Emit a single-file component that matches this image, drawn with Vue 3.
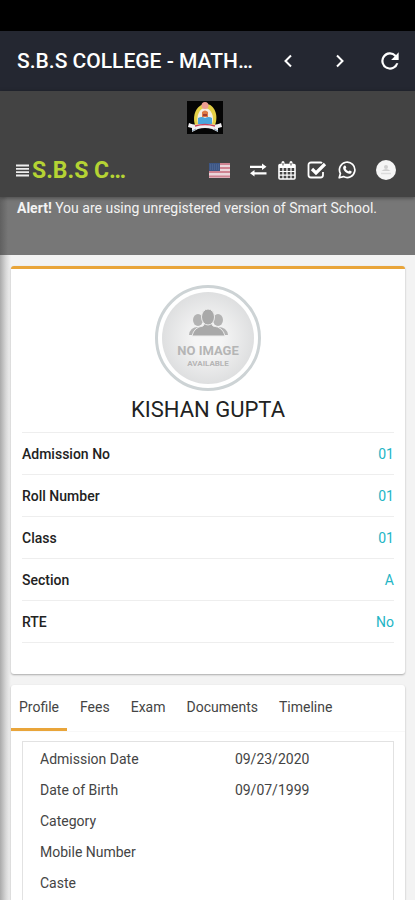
<template>
  <div class="app">
    <div class="status-bar"></div>

    <!-- browser bar -->
    <nav class="browser-bar">
      <span class="page-title">S.B.S COLLEGE - MATH…</span>
      <button type="button" class="nav-btn" aria-label="Back">
        <svg width="24" height="24" viewBox="0 0 24 24"><path d="M14 6.500 8.500 12l5.500 5.500" class="stroke" /></svg>
      </button>
      <button type="button" class="nav-btn" aria-label="Forward">
        <svg width="24" height="24" viewBox="0 0 24 24"><path d="M10 6.500 15.500 12 10 17.500" class="stroke" /></svg>
      </button>
      <button type="button" class="nav-btn" aria-label="Reload">
        <svg width="26" height="26" viewBox="0 0 24 24">
          <path fill="#fff" d="M17.650 6.350A8 8 0 1 0 19.730 14h-2.080A6 6 0 1 1 12 6c1.660 0 3.140.690 4.220 1.780L13 11h7V4z" />
        </svg>
      </button>
    </nav>

    <!-- school header -->
    <header class="header">
      <a href="#" class="logo" aria-label="Home">
        <svg width="36" height="33" viewBox="0 0 36 33">
          <rect width="36" height="33" fill="#050505" />
          <path d="M8 24C5 15 9 4 18 3s14 11 10 21z" fill="#e3cf45" />
          <path d="M11 23c-2-7 1-16 7-16s10 9 7 16z" fill="#f6eee2" />
          <circle cx="18" cy="4.500" r="3.500" fill="#ef9d92" />
          <path d="M15 11q3-3 6 0v5h-6z" fill="#dd7a45" />
          <path d="M16 13h4v2h-4z" fill="#a33f35" />
          <path d="M11 17q4-2 7 0 4-2 7 0v6H11z" fill="#4aa5dc" />
          <path d="M2 22c6 3 9 1 16 1s10 2 16-1l1 4-4 1v4l-6-3q-7-2-14 0l-6 3v-4l-4-1z" fill="#f2f0f2" />
          <path d="M8 25q10-3 20 0" fill="none" stroke="#c9425b" stroke-width="1.500" />
          <path d="m5 30 4-2m18 0 4 2" stroke="#7e9bb0" />
        </svg>
      </a>
      <div class="toolbar">
        <button type="button" class="icon-btn" aria-label="Menu">
          <svg width="13" height="13" viewBox="0 0 13 13"><path d="M0 1.500h13M0 4.800h13M0 8.200h13M0 11.500h13" stroke="#eee" stroke-width="1.800" /></svg>
        </button>
        <a href="#" class="brand">S.B.S C…</a>
        <div class="tools">
          <button type="button" class="icon-btn flag" aria-label="Language">
            <svg width="21" height="15" viewBox="0 0 21 15">
              <rect width="21" height="15" fill="#ead5da" />
              <path d="M0 1h21M0 5h21M0 9h21M0 13.500h21" stroke="#cf8391" stroke-width="2" />
              <rect width="11" height="8" fill="#3d5684" />
              <path d="M1 2h9M1 4h9M1 6h9" stroke="#6d85ab" stroke-width=".6" stroke-dasharray="1 1" />
            </svg>
          </button>
          <button type="button" class="icon-btn" aria-label="Switch class">
            <svg width="18" height="14" viewBox="0 0 18 14">
              <path d="M1 2.800h12V.500l4.500 3.300L13 7V5H1zM17.500 9.200h-12V7L1 10.300l4.500 3.200v-2.100h12z" fill="#fff" />
            </svg>
          </button>
          <button type="button" class="icon-btn" aria-label="Calendar">
            <svg width="18" height="19" viewBox="0 0 18 19">
              <rect x="1" y="3.500" width="16" height="14.500" rx="1" fill="none" stroke="#fff" stroke-width="1.600" />
              <path d="M1 4h16v3H1z" fill="#fff" />
              <path d="M5 7v11M9 7v11M13 7v11M1 10.500h16M1 14.200h16" stroke="#fff" stroke-width="1.200" />
              <path d="M5 1.500v3M13 1.500v3" stroke="#fff" stroke-width="3" stroke-linecap="round" />
              <path d="M5 2v2.500M13 2v2.500" stroke="#434343" />
            </svg>
          </button>
          <button type="button" class="icon-btn" aria-label="Tasks">
            <svg width="20" height="18" viewBox="0 0 20 18">
              <path d="M15 2.200A2 2 0 0 0 13.500 1.500H4A2.500 2.500 0 0 0 1.500 4v10A2.500 2.500 0 0 0 4 16.500h9.500A2.500 2.500 0 0 0 16 14v-3" fill="none" stroke="#fff" stroke-width="1.800" />
              <path d="m5 8 4 4 9-9" fill="none" stroke="#fff" stroke-width="3.200" />
            </svg>
          </button>
          <button type="button" class="icon-btn" aria-label="WhatsApp">
            <svg width="18" height="18" viewBox="0 0 18 18">
              <path d="m1.200 16.800 1.200-4.300a7.700 7.700 0 1 1 3.100 3.100z" fill="none" stroke="#fff" stroke-width="1.700" stroke-linejoin="round" />
              <path d="M6.200 4.700c.600-.500 1.300-.300 1.500.2l.6 1.500c.1.500-.7 1-.7 1.400.7 1.300 1.500 2 2.800 2.500.4 0 .9-1 1.400-.8l1.600.8c.5.300.2 1.400-.3 1.900-1.200 1-2.800.7-4.600-.4C6.500 10.500 5.200 8.600 5.100 7c0-.9.400-1.800 1.100-2.300z" fill="#fff" />
            </svg>
          </button>
          <button type="button" class="icon-btn account" aria-label="Account">
            <svg width="20" height="20" viewBox="0 0 20 20">
              <circle cx="10" cy="10" r="10" fill="#f5f5f5" />
              <circle cx="10" cy="7" r="2" fill="#cfcfcf" />
              <path d="M5.500 11q4.500-4 9 0z" fill="#cfcfcf" />
              <path d="M5 13.500h10" stroke="#dcdcdc" stroke-width="1.500" />
            </svg>
          </button>
        </div>
      </div>
    </header>

    <div class="alert" role="alert"><strong>Alert!</strong> You are using unregistered version of Smart School.</div>

    <main class="content">
      <!-- student card -->
      <section class="card student">
        <svg class="photo" width="106" height="106" viewBox="0 0 106 106" role="img" aria-label="No image available">
          <defs>
            <radialGradient id="disc">
              <stop offset="0.3" stop-color="#f5f5f5" />
              <stop offset="1" stop-color="#dedfe0" />
            </radialGradient>
          </defs>
          <circle cx="53" cy="53" r="51.500" fill="#fff" stroke="#cdd3d5" stroke-width="3" />
          <circle cx="53" cy="53" r="46" fill="url(#disc)" />
          <g fill="#b3b3b3">
            <ellipse cx="43" cy="35" rx="5" ry="6" />
            <ellipse cx="63" cy="35" rx="5" ry="6" />
            <path d="M34 50q1-8 9-8h20q9 0 10 8z" />
          </g>
          <g fill="#a9a9a9" stroke="#ececec" stroke-width="1">
            <path d="M37 51q2-9 11-10l2-3h6l2 3q10 1 12 10z" />
            <ellipse cx="53" cy="32" rx="6.500" ry="8" />
          </g>
          <text x="53" y="70" class="photo-title">NO IMAGE</text>
          <text x="53" y="81" class="photo-sub">AVAILABLE</text>
        </svg>
        <h1 class="student-name">KISHAN GUPTA</h1>
        <ul class="info-list">
          <li v-for="item in info" :key="item.label">
            <b>{{ item.label }}</b>
            <span class="info-value">{{ item.value }}</span>
          </li>
        </ul>
      </section>

      <!-- tabs -->
      <section class="card details">
        <div class="tabs" role="tablist">
          <button
            v-for="tab in tabs"
            :key="tab"
            type="button"
            role="tab"
            class="tab"
            :class="{ active: tab === activeTab }"
            :aria-selected="tab === activeTab"
            @click="activeTab = tab"
          >{{ tab }}</button>
        </div>
        <div class="tab-pane">
          <table v-if="activeTab === 'Profile'" class="profile-table">
            <tbody>
              <tr v-for="row in profile" :key="row.label">
                <th scope="row">{{ row.label }}</th>
                <td>{{ row.value }}</td>
              </tr>
            </tbody>
          </table>
        </div>
      </section>
    </main>
  </div>
</template>

<script setup>
import { ref } from 'vue'

const info = [
  { label: 'Admission No', value: '01' },
  { label: 'Roll Number', value: '01' },
  { label: 'Class', value: '01' },
  { label: 'Section', value: 'A' },
  { label: 'RTE', value: 'No' },
]

const tabs = ['Profile', 'Fees', 'Exam', 'Documents', 'Timeline']
const activeTab = ref('Profile')

const profile = [
  { label: 'Admission Date', value: '09/23/2020' },
  { label: 'Date of Birth', value: '09/07/1999' },
  { label: 'Category', value: '' },
  { label: 'Mobile Number', value: '' },
  { label: 'Caste', value: '' },
]
</script>

<style>
body { margin: 0; background: #f3f3f3; }
</style>

<style scoped>
* { box-sizing: border-box; }
.app {
  display: flex;
  flex-direction: column;
  min-height: 100vh;
  font-family: Roboto, "Liberation Sans", sans-serif;
  font-size: 14px;
  color: #444;
}
button {
  padding: 0;
  border: none;
  background: none;
  font: inherit;
  color: inherit;
  cursor: pointer;
}
svg { display: block; }

.status-bar { height: 31px; background: #000; }
.browser-bar {
  display: flex;
  align-items: center;
  height: 60px;
  padding: 0 12px 0 17px;
  background: #242731;
  color: #fff;
}
.page-title {
  flex: 1;
  white-space: nowrap;
  font-size: 21px;
  font-weight: 500;
}
.nav-btn { margin-left: 26px; }
.page-title + .nav-btn { margin-left: 0; }
.stroke { fill: none; stroke: #fff; stroke-width: 2; }

.header {
  position: relative;
  background: #434343;
  box-shadow: 0 1px 4px rgba(0, 0, 0, 0.4);
}
.logo { display: flex; justify-content: center; padding: 10px 5px 9px 0; }
.toolbar {
  display: flex;
  align-items: center;
  height: 54px;
  padding: 0 19px 0 16px;
}
.brand {
  margin-left: 3px;
  white-space: nowrap;
  font-size: 23px;
  font-weight: 700;
  color: #b5d334;
  text-decoration: none;
}
.tools { display: flex; align-items: center; gap: 11px; margin-left: auto; }
.flag { margin-right: 8px; }
.account { margin-left: 9px; }

.alert {
  height: 58px;
  padding: 2px 17px;
  background: linear-gradient(to right, #606060, #777 8px);
  line-height: 18px;
  color: #f3f3f3;
}

.content {
  flex: 1;
  display: flex;
  flex-direction: column;
  gap: 11px;
  padding: 11px 10px 0 11px;
  background: linear-gradient(to right, #aaa, #d8d8d8 6px, #f3f3f3 11px);
}
.card {
  background: #fff;
  border-radius: 3px;
  box-shadow: 0 1px 2px rgba(0, 0, 0, 0.3);
}
.student { padding: 16px 11px 31px; border-top: 3px solid #e9a53a; }
.photo { margin: 0 auto; }
.photo-title,
.photo-sub { text-anchor: middle; font-weight: 700; fill: #b5b5b5; }
.photo-title { font-size: 13px; }
.photo-sub { font-size: 8px; }
.student-name {
  margin: 4px 0 7px;
  text-align: center;
  font-size: 22px;
  line-height: 30px;
  font-weight: 400;
  color: #222;
}
.info-list {
  margin: 0;
  padding: 0;
  list-style: none;
  border-top: 1px solid #eee;
}
.info-list li {
  display: flex;
  justify-content: space-between;
  padding: 11px 0 10px;
  border-bottom: 1px solid #eee;
  line-height: 20px;
}
.info-list b { font-weight: 500; color: #222; }
.info-value { color: #23b5c5; }

.details { flex: 1; display: flex; flex-direction: column; border-radius: 3px 3px 0 0; }
.tabs { display: flex; gap: 5px; border-bottom: 1px solid #f8f8f8; }
.tab {
  height: 46px;
  padding: 0 8px;
  border-bottom: 3px solid transparent;
}
.tab.active { border-bottom-color: #e9a53a; }
.tab-pane {
  flex: 1;
  margin: 9px 11px 0;
  padding: 1px 17px 0;
  border: 1px solid #e2e2e2;
  border-bottom: none;
}
.profile-table { width: 100%; table-layout: fixed; border-collapse: collapse; }
.profile-table th,
.profile-table td {
  height: 31px;
  padding: 0;
  font-weight: 400;
  text-align: left;
}
.profile-table th { width: 58%; }
</style>
